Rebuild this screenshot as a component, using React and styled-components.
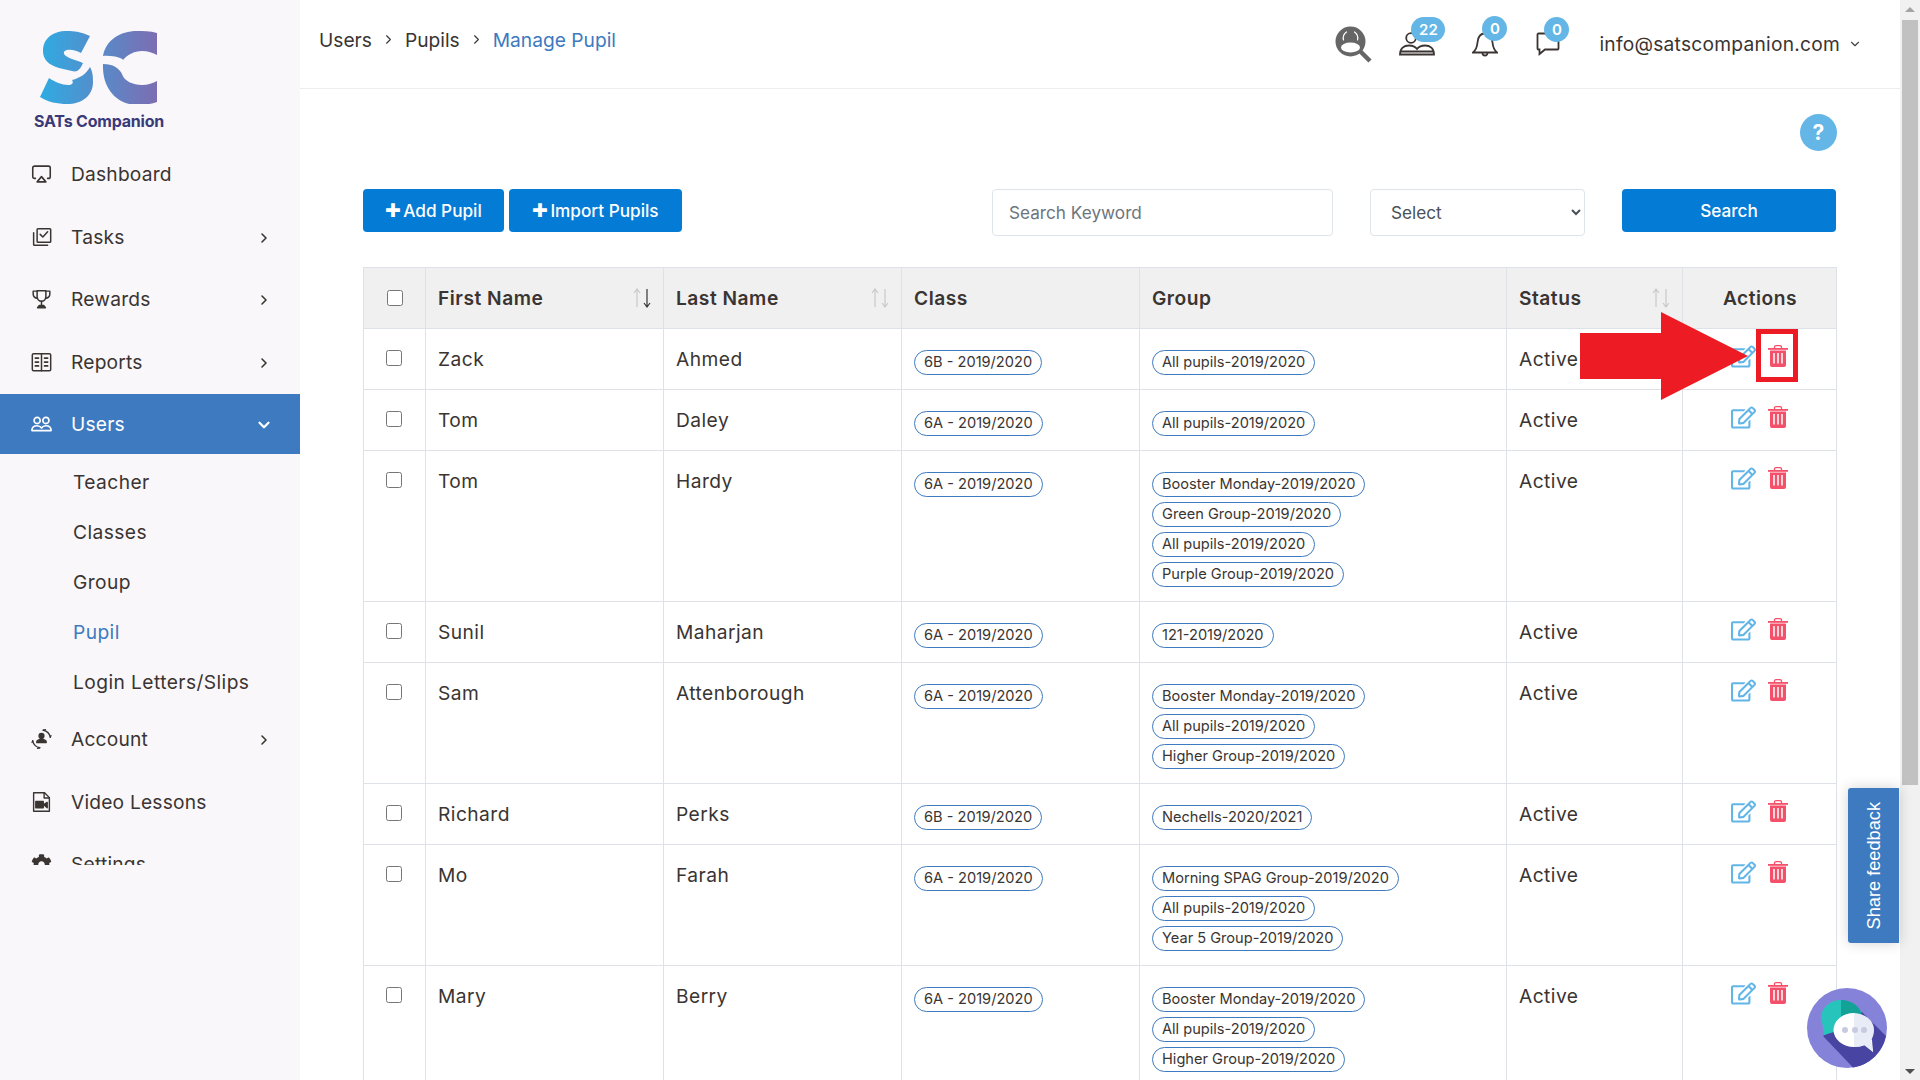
import React from "react";
import styled, { createGlobalStyle } from "styled-components";
import { FaRegEdit, FaCog } from "react-icons/fa";
import { Airplay, ChevronRight, ChevronDown } from "lucide-react";

const GlobalStyle = createGlobalStyle`
  html, body {
    margin: 0;
    height: 100%;
    overflow: hidden;
    background: #fff;
    font-family: Inter, "Noto Sans", sans-serif;
    color: #3a3432;
  }
  * { box-sizing: border-box; }
`;

const Frame = styled.div`
  position: relative;
  display: flex;
  height: 100vh;
  overflow: hidden;
`;

// Sidebar
const Sidebar = styled.aside`
  flex: 0 0 300px;
  background: #f9f7f9;
`;

const LogoBlock = styled.div`
  height: 142.7px;
  padding: 26px 0 0 34px;
`;

const LogoText = styled.div`
  margin-top: 8px;
  font-size: 16px;
  font-weight: 700;
  line-height: 18px;
  color: #3b3a78;
  letter-spacing: -0.2px;
`;

const Nav = styled.nav`
  height: 722.3px;
  overflow: hidden;
`;

const NavItem = styled.div`
  display: flex;
  align-items: center;
  height: ${(p) => (p.$active ? "60px" : "62.7px")};
  margin-top: ${(p) => (p.$active ? "0.5px" : "0")};
  padding: 0 ${(p) => (p.$active ? 27 : 28)}px 0 31px;
  gap: 19px;
  font-size: 19.2px;
  letter-spacing: 0.2px;
  background: ${(p) => (p.$active ? "#3d7ac0" : "transparent")};
  color: ${(p) => (p.$active ? "#fff" : "#3a3432")};
`;

const NavIcon = styled.span`
  display: flex;
  width: 21px;
  height: 24px;
  align-items: center;
  justify-content: center;
`;

const NavCaret = styled.span`
  display: flex;
  margin-left: auto;
  padding-top: 2px;
`;

const SubList = styled.div`
  padding: 3px 0 0.6px 73px;
`;

const SubItem = styled.div`
  height: 50px;
  line-height: 50px;
  font-size: 19.2px;
  letter-spacing: 0.42px;
  color: ${(p) => (p.$current ? "#3d7ac0" : "#3a3432")};
`;

// Main column
const Main = styled.main`
  flex: 1;
  min-width: 0;
`;

const Header = styled.header`
  display: flex;
  align-items: center;
  height: 89px;
  padding: 0 38px 0 19px;
  border-bottom: 1px solid #eeeeee;
`;

const Crumbs = styled.div`
  display: flex;
  align-items: center;
  gap: 9px;
  margin-top: -9px;
  font-size: 19.2px;
`;

const Crumb = styled.span`
  color: ${(p) => (p.$current ? "#3d7ac0" : "#3a3432")};
`;

const CrumbSep = styled.span`
  display: flex;
  color: #3a3432;
`;

const HeaderTools = styled.div`
  display: flex;
  align-items: center;
  margin-left: auto;
`;

const ToolIcon = styled.span`
  position: relative;
  display: flex;
  margin-left: ${(p) => p.$gap}px;
`;

const Badge = styled.span`
  position: absolute;
  top: -15px;
  left: ${(p) => p.$left}px;
  min-width: ${(p) => (p.$wide ? 34 : 25)}px;
  height: 25px;
  border-radius: 13px;
  background: #63b6e6;
  color: #fff;
  font-size: 15px;
  font-weight: 600;
  line-height: 25px;
  text-align: center;
`;

const Email = styled.span`
  margin-left: 39px;
  font-size: 19.2px;
  letter-spacing: 0.24px;
  white-space: nowrap;
`;

const EmailCaret = styled.span`
  display: flex;
  margin-left: 8px;
  color: #444;
`;

const Content = styled.div`
  padding: 25px 63px 0;
`;

const HelpRow = styled.div`
  display: flex;
  justify-content: flex-end;
`;

const HelpButton = styled.span`
  width: 37px;
  height: 37px;
  border-radius: 50%;
  background: #63b6e6;
  color: #fff;
  font-size: 21px;
  font-weight: 700;
  line-height: 37px;
  text-align: center;
`;

const Toolbar = styled.div`
  display: flex;
  align-items: flex-start;
  margin: 38px 0 31px;
`;

const Button = styled.button`
  display: flex;
  align-items: center;
  justify-content: center;
  gap: 2px;
  width: ${(p) => p.$width}px;
  height: 43px;
  margin-left: ${(p) => p.$gap || 0}px;
  padding: 0;
  border: 0;
  border-radius: 4px;
  background: #047bd5;
  color: #fff;
  font-family: inherit;
  font-size: 17.2px;
  font-weight: 500;
`;

const PlusMark = styled.span`
  font-size: 19px;
  line-height: 1;
`;

const SearchInput = styled.input`
  width: 341px;
  height: 47px;
  margin-left: 310px;
  padding: 0 16px;
  border: 1px solid #dfe4ea;
  border-radius: 4px;
  font-family: inherit;
  font-size: 17.2px;
  color: #3a3432;

  &::placeholder {
    color: #6c757d;
    opacity: 1;
  }
`;

const SelectBox = styled.select`
  width: 215px;
  height: 47px;
  margin-left: 37px;
  padding: 0 16px;
  border: 1px solid #dfe4ea;
  border-radius: 4px;
  background: #fff;
  font-family: inherit;
  font-size: 17.2px;
  color: #495057;
`;

// Table
const Table = styled.table`
  width: 1473px;
  table-layout: fixed;
  border-collapse: collapse;
`;

const Th = styled.th`
  height: 61px;
  padding: 0 11px 0 12px;
  border: 1px solid #dfe1e8;
  background: #f0f0f0;
  font-size: 19.2px;
  font-weight: 600;
  letter-spacing: 0.5px;
  text-align: ${(p) => (p.$center ? "center" : "left")};
  color: #3a3432;
`;

const ThInner = styled.div`
  display: flex;
  align-items: center;
  justify-content: space-between;
`;

const Td = styled.td`
  padding: 15px 12px;
  border: 1px solid #dfe1e8;
  font-size: 19.2px;
  letter-spacing: 0.45px;
  line-height: 30px;
  vertical-align: top;
`;

const CheckCell = styled.div`
  display: flex;
  justify-content: center;
  padding-top: ${(p) => (p.$head ? 0 : 6)}px;
  padding-right: 1px;
`;

const Check = styled.input.attrs({ type: "checkbox" })`
  width: 16px;
  height: 16px;
  margin: 0;
`;

const Pill = styled.span`
  display: block;
  width: fit-content;
  height: 25px;
  margin: 6px 0 -1px;
  padding: 0 9px;
  border: 1px solid #3d7ac0;
  border-radius: 13px;
  font-size: 14.6px;
  letter-spacing: 0;
  line-height: 23px;
  white-space: nowrap;
`;

const ActionCell = styled.div`
  display: flex;
  justify-content: center;
  gap: 12px;
  padding: 1px 1px 0 0;
  color: #62b6e7;

  svg:first-child {
    margin-top: -1px;
  }
`;

// Overlays
const Callout = styled.svg`
  position: absolute;
  left: 1580px;
  top: 312px;
`;

const RedBox = styled.div`
  position: absolute;
  left: 1756px;
  top: 329px;
  width: 42px;
  height: 53px;
  border: 5px solid #ed1c24;
`;

const Feedback = styled.div`
  position: absolute;
  left: 1848px;
  top: 788px;
  display: flex;
  align-items: center;
  justify-content: center;
  width: 51px;
  height: 155px;
  padding-left: 1px;
  border-radius: 3px 0 0 3px;
  background: #3d7ac0;
  box-shadow: 0 0 14px rgba(0, 0, 0, 0.18);
  color: #fff;
  font-family: "Liberation Sans", Arial, sans-serif;
  font-size: 18.2px;
  writing-mode: vertical-rl;

  span {
    transform: rotate(180deg);
  }
`;

const ChatBubble = styled.svg`
  position: absolute;
  left: 1807px;
  top: 988px;
`;

const Scrollbar = styled.div`
  position: relative;
  flex: 0 0 20px;
  background: #f1f1f1;
`;

const ScrollThumb = styled.div`
  position: absolute;
  left: 2px;
  right: 2px;
  top: 20px;
  height: 765px;
  background: #c1c1c1;
`;

const ScrollArrow = styled.div`
  position: absolute;
  left: 5px;
  width: 0;
  height: 0;
  border-left: 5px solid transparent;
  border-right: 5px solid transparent;
  ${(p) =>
    p.$down
      ? "bottom: 6px; border-top: 5px solid #505050;"
      : "top: 7px; border-bottom: 5px solid #a3a3a3;"}
`;

// Drawn icons
const Line = ({ size = 22, children, w = 1.7, vb = 24 }) => (
  <svg width={size} height={size} viewBox={`0 0 ${vb} ${vb}`} fill="none" stroke="currentColor" strokeWidth={w} strokeLinecap="round" strokeLinejoin="round">
    {children}
  </svg>
);

const TasksIcon = () => (
  <Line>
    <rect x="7" y="2.500" width="15.500" height="15.500" rx="1" />
    <path d="M10.500 9l3 3 5.500-6" />
    <path d="M3 7v13.500a1 1 0 0 0 1 1h15" />
  </Line>
);

const TrophyIcon = () => (
  <Line>
    <path d="M7 2.500h10v7a5 5 0 0 1-10 0z" />
    <path d="M7 3H2.500v3.500A4.500 4.500 0 0 0 7.500 11M17 3h4.500v3.500A4.500 4.500 0 0 1 16.500 11" />
    <path d="M12 14.500v5" />
    <path d="M7.500 22l2-2.500h5l2 2.500z" fill="currentColor" />
  </Line>
);

const ReportsIcon = () => (
  <Line>
    <rect x="1.500" y="2.500" width="21" height="19.500" rx="1.500" />
    <path d="M12 2.500V22" />
    <path d="M5 7.500h3.500M15.500 7.500H19M5 12h3.500M15.500 12H19M5 16.500h3.500M15.500 16.500H19" strokeWidth="2" />
  </Line>
);

const UsersIcon = ({ size = 22, w = 1.9 }) => (
  <Line size={size} w={w}>
    <circle cx="7" cy="8" r="3.500" />
    <circle cx="17" cy="8" r="3.500" />
    <path d="M1 19.500c0-3.500 2.500-5.500 6-5.500 2.500 0 4 1 5 2.500 1-1.500 2.500-2.500 5-2.500 3.500 0 6 2 6 5.500z" />
  </Line>
);

const AccountIcon = () => (
  <Line size={24} w={1.5}>
    <circle cx="12" cy="8.500" r="2.800" fill="currentColor" />
    <path d="M6.500 16c0-2.500 2.500-3.500 5.500-3.500s5.500 1 5.500 3.500z" fill="currentColor" />
    <path d="M14 2a10 10 0 0 1 8 8M10 22a10 10 0 0 1-8-8" />
    <path d="M14 2l2.500-.8M10 22l-2.500.8M22 10l.8-2M2 14l-.8 2" />
  </Line>
);

const VideoFileIcon = () => (
  <Line w={1.6}>
    <path d="M3 1.500h12.500L21 7v15.500H3z" />
    <path d="M15 1.500V7.500h6" />
    <rect x="5.500" y="11.500" width="8.500" height="7" fill="currentColor" />
    <path d="M14.500 15l4-2.500v6z" fill="currentColor" />
  </Line>
);

const PersonSearchIcon = () => (
  <svg width="37" height="37" viewBox="0 0 37 37" fill="none">
    <path d="M24.500 24.500L35 35" stroke="#666" strokeWidth="4.500" />
    <circle cx="15.500" cy="15.500" r="15" fill="#666" />
    <ellipse cx="15.500" cy="21.500" rx="9.500" ry="5" fill="#fff" />
    <path d="M8.500 14A7.500 7.500 0 0 1 11.500 6M22.500 14A7.500 7.500 0 0 0 19.500 6" stroke="#fff" strokeWidth="1.200" strokeLinecap="round" />
  </svg>
);

const PeopleIcon = () => (
  <svg width="36" height="24" viewBox="0 0 36 24" fill="none" stroke="#3a3432" strokeWidth="1.800">
    <circle cx="12" cy="6" r="4.800" />
    <path d="M1 22.500c0-6 4-9 9-9 4 0 6.500 1.500 8 3.500 1.500-2 4-3.500 8-3.500 5 0 9 3 9 9z" />
    <path d="M1 19.500h34" />
  </svg>
);

const BellIcon = () => (
  <svg width="26" height="26" viewBox="0 0 26 26" fill="none" stroke="#3a3432" strokeWidth="1.800">
    <path d="M1 21.500c3-2.500 4-5 4.500-10C6 5.500 9 2.500 13 2.500s7 3 7.500 9c.5 5 1.500 7.500 4.500 10z" />
    <path d="M10.500 22a2.500 2.500 0 0 0 5 0" />
  </svg>
);

const ChatIcon = () => (
  <svg width="24" height="24" viewBox="0 0 24 24" fill="none" stroke="#3a3432" strokeWidth="1.800">
    <path d="M2.500 1.500h19a1 1 0 0 1 1 1v14a1 1 0 0 1-1 1H9l-5.500 4.500v-4.500h-1a1 1 0 0 1-1-1v-14a1 1 0 0 1 1-1z" />
  </svg>
);

const TrashIcon = () => (
  <svg width="20" height="22" viewBox="0 0 20 22">
    <path d="M6.500 3V1.800C6.500 1 7.200.7 8 .7h4c.8 0 1.500.3 1.500 1.100V3" fill="none" stroke="#f4506a" strokeWidth="1.300" />
    <rect x="0" y="3" width="20" height="1.800" fill="#f4506a" />
    <path d="M2 5.500h16v14.500a2 2 0 0 1-2 2H4a2 2 0 0 1-2-2z" fill="#f4506a" />
    <path d="M6 8v10.500M10 8v10.500M14 8v10.500" stroke="#fff" strokeWidth="1.500" />
  </svg>
);

const SortArrows = ({ active }) => (
  <svg width="20" height="20" viewBox="0 0 20 20" fill="none" strokeWidth="1.200">
    <path d="M5 19V1M2 5l3-4 3 4" stroke="#c9c9c9" />
    <path d="M15 1v18M12 15l3 4 3-4" stroke={active ? "#3a3432" : "#c9c9c9"} />
  </svg>
);

const Logo = () => (
  <svg width="130" height="78" viewBox="4 8 130 78" style={{ display: "block" }}>
    <defs>
      <linearGradient id="scGrad" gradientUnits="userSpaceOnUse" x1="10" y1="0" x2="127" y2="0">
        <stop offset="0" stopColor="#2fabe2" />
        <stop offset="1" stopColor="#7d6db2" />
      </linearGradient>
    </defs>
    <g fill="url(#scGrad)">
      <path d="M60 18C52 14 44 13 37 13 22 13 13 21 13 33c0 9 6 14 16 17l13 3c5 1.500 8-1 11-8-7-3-13-4-17-7-3-2-3-5 1-6 5-1 10 1 14 3z" />
      <path d="M60 49c3 5 3 11 3 15 0 14-11 22-26 22-10 0-19-2-27-7l9-19c6 4 13 7 19 7 4 0 6-2 4-5 8-2 14-6 18-13z" />
      <path d="M127 15c-7-2-14-2-20-2-17 0-31 9-34 25 11-1 21 3 20 4 4-5 11-9 19-9 6 0 11 2 15 4z" />
      <path d="M73 46c10 0 16 4 19 10 2 7 11 11 20 11 6 0 11-2 15-4v21c-6 2-12 3-19 3-20 0-36-15-35-41z" />
    </g>
  </svg>
);

const NAV_TOP = [
  { label: "Dashboard", icon: <Airplay size={22} strokeWidth={1.8} /> },
  { label: "Tasks", icon: <TasksIcon />, caret: true },
  { label: "Rewards", icon: <TrophyIcon />, caret: true },
  { label: "Reports", icon: <ReportsIcon />, caret: true },
];

const SUB_ITEMS = ["Teacher", "Classes", "Group", "Pupil", "Login Letters/Slips"];

const NAV_BOTTOM = [
  { label: "Account", icon: <AccountIcon />, caret: true },
  { label: "Video Lessons", icon: <VideoFileIcon /> },
  { label: "Settings", icon: <FaCog size={21} /> },
];

const PUPILS = [
  { first: "Zack", last: "Ahmed", cls: "6B - 2019/2020", groups: ["All pupils-2019/2020"] },
  { first: "Tom", last: "Daley", cls: "6A - 2019/2020", groups: ["All pupils-2019/2020"] },
  {
    first: "Tom",
    last: "Hardy",
    cls: "6A - 2019/2020",
    groups: ["Booster Monday-2019/2020", "Green Group-2019/2020", "All pupils-2019/2020", "Purple Group-2019/2020"],
  },
  { first: "Sunil", last: "Maharjan", cls: "6A - 2019/2020", groups: ["121-2019/2020"] },
  {
    first: "Sam",
    last: "Attenborough",
    cls: "6A - 2019/2020",
    groups: ["Booster Monday-2019/2020", "All pupils-2019/2020", "Higher Group-2019/2020"],
  },
  { first: "Richard", last: "Perks", cls: "6B - 2019/2020", groups: ["Nechells-2020/2021"] },
  {
    first: "Mo",
    last: "Farah",
    cls: "6A - 2019/2020",
    groups: ["Morning SPAG Group-2019/2020", "All pupils-2019/2020", "Year 5 Group-2019/2020"],
  },
  {
    first: "Mary",
    last: "Berry",
    cls: "6A - 2019/2020",
    groups: ["Booster Monday-2019/2020", "All pupils-2019/2020", "Higher Group-2019/2020"],
  },
];

const MenuRow = ({ item }) => (
  <NavItem>
    <NavIcon>{item.icon}</NavIcon>
    {item.label}
    {item.caret && (
      <NavCaret>
        <ChevronRight size={16} strokeWidth={2.4} />
      </NavCaret>
    )}
  </NavItem>
);

export default function App() {
  return (
    <Frame>
      <GlobalStyle />
      <Sidebar>
        <LogoBlock>
          <Logo />
          <LogoText>SATs Companion</LogoText>
        </LogoBlock>
        <Nav>
          {NAV_TOP.map((item) => (
            <MenuRow key={item.label} item={item} />
          ))}
          <NavItem $active>
            <NavIcon>
              <UsersIcon />
            </NavIcon>
            Users
            <NavCaret>
              <ChevronDown size={18} strokeWidth={3} />
            </NavCaret>
          </NavItem>
          <SubList>
            {SUB_ITEMS.map((label) => (
              <SubItem key={label} $current={label === "Pupil"}>
                {label}
              </SubItem>
            ))}
          </SubList>
          {NAV_BOTTOM.map((item) => (
            <MenuRow key={item.label} item={item} />
          ))}
        </Nav>
      </Sidebar>

      <Main>
        <Header>
          <Crumbs>
            <Crumb>Users</Crumb>
            <CrumbSep>
              <ChevronRight size={15} strokeWidth={1.8} />
            </CrumbSep>
            <Crumb>Pupils</Crumb>
            <CrumbSep>
              <ChevronRight size={15} strokeWidth={1.8} />
            </CrumbSep>
            <Crumb $current>Manage Pupil</Crumb>
          </Crumbs>
          <HeaderTools>
            <ToolIcon $gap={0}>
              <PersonSearchIcon />
            </ToolIcon>
            <ToolIcon $gap={27}>
              <PeopleIcon />
              <Badge $left={12} $wide>
                22
              </Badge>
            </ToolIcon>
            <ToolIcon $gap={37}>
              <BellIcon />
              <Badge $left={10}>0</Badge>
            </ToolIcon>
            <ToolIcon $gap={38}>
              <ChatIcon />
              <Badge $left={8}>0</Badge>
            </ToolIcon>
            <Email>info@satscompanion.com</Email>
            <EmailCaret>
              <ChevronDown size={14} strokeWidth={2} />
            </EmailCaret>
          </HeaderTools>
        </Header>

        <Content>
          <HelpRow>
            <HelpButton>?</HelpButton>
          </HelpRow>
          <Toolbar>
            <Button $width={141}>
              <PlusMark>✚</PlusMark>Add Pupil
            </Button>
            <Button $width={173} $gap={5}>
              <PlusMark>✚</PlusMark>Import Pupils
            </Button>
            <SearchInput placeholder="Search Keyword" />
            <SelectBox defaultValue="">
              <option value="">Select</option>
            </SelectBox>
            <Button $width={214} $gap={37}>
              Search
            </Button>
          </Toolbar>

          <Table>
            <colgroup>
              <col width="62" />
              <col width="238" />
              <col width="238" />
              <col width="238" />
              <col width="367" />
              <col width="176" />
              <col width="154" />
            </colgroup>
            <thead>
              <tr>
                <Th>
                  <CheckCell $head>
                    <Check />
                  </CheckCell>
                </Th>
                <Th>
                  <ThInner>
                    First Name
                    <SortArrows active />
                  </ThInner>
                </Th>
                <Th>
                  <ThInner>
                    Last Name
                    <SortArrows />
                  </ThInner>
                </Th>
                <Th>Class</Th>
                <Th>Group</Th>
                <Th>
                  <ThInner>
                    Status
                    <SortArrows />
                  </ThInner>
                </Th>
                <Th $center>Actions</Th>
              </tr>
            </thead>
            <tbody>
              {PUPILS.map((p) => (
                <tr key={p.first + p.last}>
                  <Td>
                    <CheckCell>
                      <Check />
                    </CheckCell>
                  </Td>
                  <Td>{p.first}</Td>
                  <Td>{p.last}</Td>
                  <Td>
                    <Pill>{p.cls}</Pill>
                  </Td>
                  <Td>
                    {p.groups.map((g) => (
                      <Pill key={g}>{g}</Pill>
                    ))}
                  </Td>
                  <Td>Active</Td>
                  <Td>
                    <ActionCell>
                      <FaRegEdit size={25} />
                      <TrashIcon />
                    </ActionCell>
                  </Td>
                </tr>
              ))}
            </tbody>
          </Table>
        </Content>
      </Main>

      <Scrollbar>
        <ScrollArrow />
        <ScrollThumb />
        <ScrollArrow $down />
      </Scrollbar>

      <Callout width="168" height="88" viewBox="0 0 168 88">
        <path d="M0 21h81V0l87 44-87 44V67H0z" fill="#ed1c24" />
      </Callout>
      <RedBox />
      <Feedback>
        <span>Share feedback</span>
      </Feedback>
      <ChatBubble width="80" height="80" viewBox="0 0 80 80">
        <circle cx="40" cy="40" r="40" fill="#8583d9" />
        <path d="M16 48L46 79.500A40 40 0 0 0 79 48L55 24z" fill="#4845a2" />
        <path d="M34 12A20 18 0 0 0 14 30c0 2 .5 4 1.500 6L17 47l10-3 7 2z" fill="#27c4bb" />
        <path d="M34 12A21 18 0 0 1 55 28L34 46z" fill="#13a296" />
        <path d="M47 25a20.500 17 0 0 0 0 34c5 0 8-1 11-2l8 7-1-12z" fill="#fff" />
        <path d="M47 25a20.500 17 0 0 1 20 17c0 5-2 9-3 10l2 12-9-7c-3 1-6 2-10 2z" fill="#e8ecf6" />
        <circle cx="38" cy="42" r="3" fill="#c8cadf" />
        <circle cx="48" cy="42" r="3" fill="#c8cadf" />
        <circle cx="57" cy="42" r="3" fill="#c8cadf" />
      </ChatBubble>
    </Frame>
  );
}
